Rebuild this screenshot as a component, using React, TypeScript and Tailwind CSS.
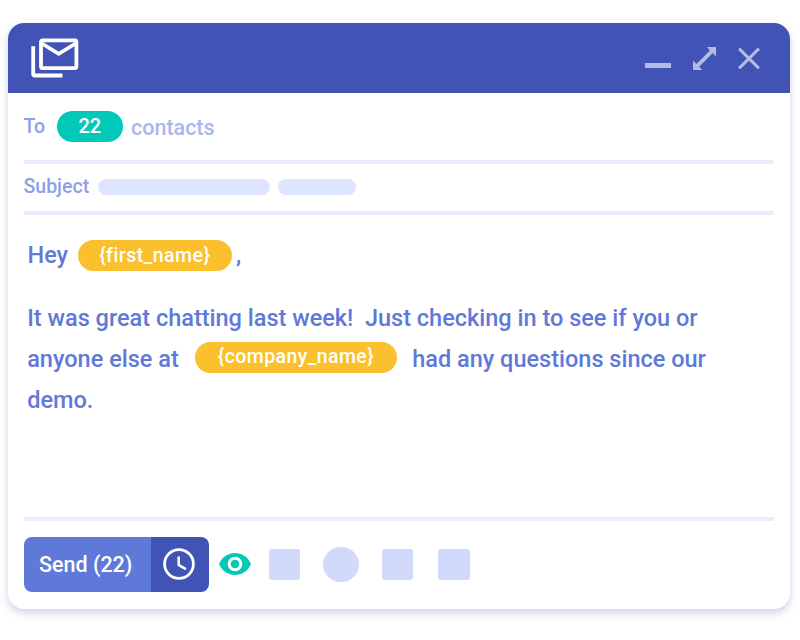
import React from "react";

function MailStackIcon() {
  return (
    <svg className="block h-[40px] w-[48px]" viewBox="0 0 48 40" fill="none" stroke="#fff" strokeWidth="4">
      <rect x="10" y="2.3" width="35.4" height="27.8" rx="1.6" strokeWidth="3.8" />
      <path d="M10.5 5.2 27.7 15.9 45 5.2" strokeWidth="3.7" />
      <path d="M2.2 8.2V36.3a1.2 1.2 0 0 0 1.2 1.2H31.5" strokeWidth="3.8" />
    </svg>
  );
}

function WindowControls() {
  return (
    <div className="flex items-center text-[#b4bbe3]">
      <div className="mt-[15px] h-[5px] w-[26px] bg-[#b4bbe3]" />
      <svg className="ml-[22px] h-[23px] w-[23px]" viewBox="0 0 23 23" fill="currentColor">
        <path d="M14 0h9v9.4l-3.3-3.3L6.2 19.7 9.5 23H0v-9.4l3.4 3.4L16.9 3.4Z" />
      </svg>
      <svg className="ml-[22px] h-[22px] w-[22px]" viewBox="0 0 22 22" fill="none" stroke="currentColor" strokeWidth="3">
        <path d="M1.1 1.6 20.9 21.4M20.9 1.6 1.1 21.4" />
      </svg>
    </div>
  );
}

function Divider() {
  return <div className="h-[4px] w-[750px] bg-[#e7ecff]" />;
}

export default function App() {
  return (
    <div className="h-[640px] w-[800px] overflow-hidden bg-white pt-[23px] pl-[8px] font-['Roboto',sans-serif] font-medium">
      <main className="flex h-[586px] w-[781.5px] flex-col overflow-hidden rounded-[16px] bg-white shadow-[0_4px_9px_rgba(65,83,181,0.26)]">
        <header className="flex h-[70px] shrink-0 items-center justify-between bg-[#4153b5] pr-[30px] pl-[22.6px]">
          <MailStackIcon />
          <WindowControls />
        </header>

        <div className="flex flex-1 flex-col px-[15.5px]">
          <div className="flex h-[67px] items-center whitespace-nowrap">
            <span className="w-[33px] text-[19.5px] leading-6 text-[#8d9fe6]">To</span>
            <span className="flex h-[31px] w-[66.5px] items-center justify-center rounded-full bg-[#02c8b8] pb-[1px] text-[20px] text-white">22</span>
            <span className="mt-[2px] ml-[8px] text-[21.5px] leading-6 text-[#a9b7ee]">contacts</span>
          </div>
          <Divider />
          <div className="flex h-[46.5px] items-center whitespace-nowrap">
            <span className="w-[74px] text-[19.5px] leading-6 text-[#8d9fe6]">Subject</span>
            <span className="mt-[-1px] h-[16px] w-[172.5px] rounded-full bg-[#e0e5ff]" />
            <span className="mt-[-1px] ml-[8px] h-[16px] w-[78px] rounded-full bg-[#e0e5ff]" />
          </div>
          <Divider />

          <div className="flex h-[302.5px] flex-col pt-[25px] pl-[4px] text-[23.5px] whitespace-pre text-[#5f79d9]">
            <div className="flex h-[31px] items-center">
              <span className="mt-[2px] w-[50px]">Hey</span>
              <span className="flex h-[31px] w-[154.5px] items-center justify-center rounded-full bg-[#fac02e] pt-px text-[19.5px] tracking-[0.45px] text-white">{"{first_name}"}</span>
              <span className="mt-[2px] ml-[4px]">,</span>
            </div>
            <div className="mt-[27px] -ml-[0.3px] h-[41px] leading-[41px]">{"It was great chatting last week!  Just checking in to see if you or"}</div>
            <div className="-ml-[0.3px] flex h-[41px] items-center">
              <span className="mt-[2px] w-[168px]">anyone else at</span>
              <span className="mb-[4px] flex h-[31px] w-[201.5px] items-center justify-center rounded-full bg-[#fac02e] text-[19.5px] tracking-[0.4px] text-white">{"{company_name}"}</span>
              <span className="mt-[2px] ml-[15.5px]">had any questions since our</span>
            </div>
            <div className="-ml-[0.3px] h-[41px] leading-[41px]">demo.</div>
          </div>
          <Divider />

          <footer className="mt-[16px] flex h-[54.5px] items-center">
            <div className="flex h-full overflow-hidden rounded-[8px]">
              <button className="flex w-[127px] items-center bg-[#5f79d9] pt-[2px] pl-[15.5px] text-[21.5px] whitespace-nowrap text-white">Send (22)</button>
              <button className="flex w-[58.5px] items-center justify-center bg-[#4153b5] pr-[1px] pb-[1px]">
                <svg className="h-[32px] w-[32px]" viewBox="0 0 32 32" fill="none" stroke="#fff">
                  <circle cx="16" cy="16" r="14.4" strokeWidth="2.8" />
                  <path d="M15.7 8.5V17l7.2 4.2" strokeWidth="2.5" />
                </svg>
              </button>
            </div>
            <svg className="ml-[10px] h-[22px] w-[32px]" viewBox="0 0 32 22">
              <path d="M16 0C9 0 2.8 4.4 0 11c2.8 6.6 9 11 16 11s13.2-4.4 16-11C29.2 4.4 23 0 16 0Z" fill="#02c8b8" />
              <circle cx="16" cy="11" r="5.8" fill="#02c8b8" stroke="#fff" strokeWidth="3" />
            </svg>
            <span className="ml-[17.5px] h-[31.5px] w-[31.5px] rounded-[3px] bg-[#d2dafc]" />
            <span className="ml-[23px] h-[35.5px] w-[35.5px] rounded-full bg-[#d2dafc]" />
            <span className="ml-[23px] h-[31.5px] w-[31.5px] rounded-[3px] bg-[#d2dafc]" />
            <span className="ml-[25px] h-[31.5px] w-[31.5px] rounded-[3px] bg-[#d2dafc]" />
          </footer>
        </div>
      </main>
    </div>
  );
}
